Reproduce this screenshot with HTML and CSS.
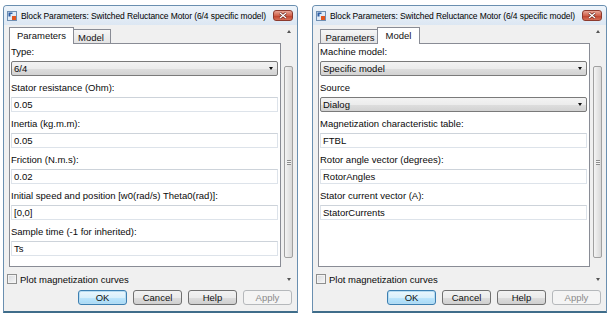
FILE: index.html
```html
<!DOCTYPE html>
<html>
<head>
<meta charset="utf-8">
<title>Block Parameters</title>
<link rel="stylesheet" href="styles.css">
</head>
<body>
<div class="desk">
  <div class="window">
    <div class="titlebar">
      <svg class="appicon" viewBox="0 0 10 10" width="10" height="10"><rect x="0.5" y="0.5" width="9" height="9" fill="#dfeaf6" stroke="#6f8fb2"/><path d="M1.5 1.5 L5.5 1.5 L5.5 3 L3.5 3 L3.5 5.5 L1.5 5.5 Z" fill="#2d5ea5"/><rect x="5" y="5" width="4" height="4" fill="#e2561f"/></svg>
      <span class="title">Block Parameters: Switched Reluctance Motor (6/4 specific model)</span>
      <span class="close"><svg viewBox="0 0 8 7" width="8" height="7"><path d="M1 1 L7 6 M7 1 L1 6" stroke="#5a1d14" stroke-width="2.4"/><path d="M1 1 L7 6 M7 1 L1 6" stroke="#fff" stroke-width="1.3"/></svg></span>
    </div>
    <div class="client">
      <div class="main">
        <div class="content">
          <div class="tabs">
            <div class="tab tab-params active">Parameters</div>
            <div class="tab tab-model">Model</div>
          </div>
          <div class="panel">
            <div class="label">Type:</div>
            <div class="combo"><span>6/4</span><i class="caret"></i></div>
            <div class="label">Stator resistance (Ohm):</div>
            <div class="edit">0.05</div>
            <div class="label">Inertia (kg.m.m):</div>
            <div class="edit">0.05</div>
            <div class="label">Friction (N.m.s):</div>
            <div class="edit">0.02</div>
            <div class="label">Initial speed and position [w0(rad/s) Theta0(rad)]:</div>
            <div class="edit">[0,0]</div>
            <div class="label">Sample time (-1 for inherited):</div>
            <div class="edit">Ts</div>
          </div>
          <div class="check"><span class="box"></span><span>Plot magnetization curves</span></div>
        </div>
        <div class="scrollbar">
          <div class="arrowbox"><i class="sarrow up"></i></div>
          <div class="thumb"><span class="grip"></span></div>
          <div class="spacer"></div>
          <div class="arrowbox bottom"><i class="sarrow down"></i></div>
        </div>
      </div>
      <div class="buttons">
        <span class="btn default">OK</span>
        <span class="btn">Cancel</span>
        <span class="btn">Help</span>
        <span class="btn disabled">Apply</span>
      </div>
    </div>
  </div>

  <div class="window">
    <div class="titlebar">
      <svg class="appicon" viewBox="0 0 10 10" width="10" height="10"><rect x="0.5" y="0.5" width="9" height="9" fill="#dfeaf6" stroke="#6f8fb2"/><path d="M1.5 1.5 L5.5 1.5 L5.5 3 L3.5 3 L3.5 5.5 L1.5 5.5 Z" fill="#2d5ea5"/><rect x="5" y="5" width="4" height="4" fill="#e2561f"/></svg>
      <span class="title">Block Parameters: Switched Reluctance Motor (6/4 specific model)</span>
      <span class="close"><svg viewBox="0 0 8 7" width="8" height="7"><path d="M1 1 L7 6 M7 1 L1 6" stroke="#5a1d14" stroke-width="2.4"/><path d="M1 1 L7 6 M7 1 L1 6" stroke="#fff" stroke-width="1.3"/></svg></span>
    </div>
    <div class="client">
      <div class="main">
        <div class="content">
          <div class="tabs">
            <div class="tab tab-params">Parameters</div>
            <div class="tab tab-model active">Model</div>
          </div>
          <div class="panel">
            <div class="label">Machine model:</div>
            <div class="combo"><span>Specific model</span><i class="caret"></i></div>
            <div class="label">Source</div>
            <div class="combo"><span>Dialog</span><i class="caret"></i></div>
            <div class="label">Magnetization characteristic table:</div>
            <div class="edit">FTBL</div>
            <div class="label">Rotor angle vector (degrees):</div>
            <div class="edit">RotorAngles</div>
            <div class="label">Stator current vector (A):</div>
            <div class="edit">StatorCurrents</div>
          </div>
          <div class="check"><span class="box"></span><span>Plot magnetization curves</span></div>
        </div>
        <div class="scrollbar">
          <div class="arrowbox"><i class="sarrow up"></i></div>
          <div class="thumb"><span class="grip"></span></div>
          <div class="spacer"></div>
          <div class="arrowbox bottom"><i class="sarrow down"></i></div>
        </div>
      </div>
      <div class="buttons">
        <span class="btn default">OK</span>
        <span class="btn">Cancel</span>
        <span class="btn">Help</span>
        <span class="btn disabled">Apply</span>
      </div>
    </div>
  </div>
</div>
</body>
</html>
```
FILE: styles.css
```css
* { box-sizing: border-box; }
body {
  margin: 0;
  background: #ffffff;
  font-family: "Liberation Sans", Arial, sans-serif;
  font-size: 9.5px;
  color: #0a0a0a;
}
.desk {
  display: flex;
  gap: 14px;
  padding: 5px 0 0 3px;
}
.window {
  width: 295px;
  height: 308px;
  border: 1px solid #6a8fb0;
  border-bottom: 2px solid #3f6d8a;
  border-radius: 4px 4px 0 0;
  background: #dde8f4;
  display: flex;
  flex-direction: column;
  overflow: hidden;
}
.titlebar {
  height: 19px;
  flex: none;
  display: flex;
  align-items: center;
  padding: 0 4px 0 3px;
  background: linear-gradient(#eef4fa, #dce7f3);
}
.appicon { flex: none; margin-right: 4px; }
.title {
  flex: 1;
  white-space: nowrap;
  font-size: 8.5px;
  letter-spacing: -0.1px;
  color: #000;
}
.close {
  flex: none;
  width: 20px;
  height: 11px;
  border: 1px solid #8c3a2e;
  border-radius: 3px;
  background: linear-gradient(#e9a595, #d0634d 50%, #bd3f2a 51%, #d66f57);
  display: flex;
  align-items: center;
  justify-content: center;
}
.client {
  flex: 1;
  background: #f0f0f0;
  display: flex;
  flex-direction: column;
  padding-right: 3px;
}
.main {
  height: 263px;
  flex: none;
  display: flex;
}
.content {
  width: 279px;
  display: flex;
  flex-direction: column;
}
.tabs {
  height: 18px;
  display: flex;
  align-items: flex-end;
  padding-left: 7px;
  position: relative;
  z-index: 1;
}
.tab {
  height: 14px;
  border: 1px solid #898c95;
  border-bottom: none;
  background: linear-gradient(#f6f6f6, #e4e4e4);
  display: flex;
  align-items: center;
  justify-content: center;
  padding-top: 1px;
  color: #111;
}
.tab + .tab { margin-left: -1px; }
.tab-params { width: 60px; }
.tab-model { width: 40px; }
.tab.active {
  height: 17px;
  margin-bottom: -1px;
  margin-right: -2px;
  background: #ffffff;
  position: relative;
  z-index: 2;
  padding-bottom: 2px;
}
.tab-params.active { width: 65px; margin-left: -2px; }
.tab-model.active { width: 43px; margin-left: -3px; }
.panel {
  margin-left: 5px;
  width: 272px;
  height: 224px;
  border: 1px solid #898c95;
  background: #ffffff;
  padding: 1px 2px 0 1px;
  display: flex;
  flex-direction: column;
}
.label {
  height: 14px;
  line-height: 14px;
  margin-bottom: 2px;
  white-space: nowrap;
}
.combo, .edit {
  height: 15px;
  margin-bottom: 5px;
  display: flex;
  align-items: center;
  padding-left: 2px;
  white-space: nowrap;
}
.combo {
  border: 1px solid #7a7a7a;
  border-radius: 2px;
  background: linear-gradient(#f3f3f3, #ececec 50%, #dedede 51%, #d2d2d2);
  justify-content: space-between;
  padding-right: 4px;
}
.caret {
  width: 0;
  height: 0;
  border-left: 2px solid transparent;
  border-right: 2px solid transparent;
  border-top: 3px solid #111;
}
.edit {
  border: 1px solid #dde3ea;
  border-top-color: #cdd3da;
  background: #ffffff;
}
.check {
  height: 12px;
  margin-top: 6px;
  padding-left: 3px;
  display: flex;
  align-items: center;
}
.box {
  width: 10px;
  height: 10px;
  border: 1px solid #8e8f8f;
  background: linear-gradient(135deg, #d6d9dd, #f7f7f7);
  box-shadow: inset 0 0 0 1px #f3f3f3;
  margin-right: 3px;
}
.scrollbar {
  width: 11px;
  display: flex;
  flex-direction: column;
  align-items: center;
}
.arrowbox {
  height: 12px;
  width: 11px;
  display: flex;
  align-items: center;
  justify-content: center;
}
.arrowbox.bottom { margin-bottom: 3px; }
.sarrow {
  width: 0;
  height: 0;
  border-left: 2px solid transparent;
  border-right: 2px solid transparent;
}
.sarrow.up { border-bottom: 3px solid #555; }
.sarrow.down { border-top: 3px solid #555; }
.thumb {
  margin-top: 29px;
  width: 9px;
  height: 192px;
  border: 1px solid #a0a0a0;
  border-radius: 2px;
  background: linear-gradient(90deg, #f4f4f4, #e6e6e6 50%, #d8d8d8);
  display: flex;
  align-items: center;
  justify-content: center;
}
.grip {
  width: 4px;
  height: 5px;
  background: repeating-linear-gradient(#8d8d8d 0 1px, #f4f4f4 1px 2px);
}
.spacer { flex: 1; }
.buttons {
  height: 15px;
  margin-top: 2px;
  display: flex;
  justify-content: flex-end;
  gap: 6px;
  padding-right: 2px;
}
.btn {
  width: 49px;
  height: 15px;
  border: 1px solid #707070;
  border-radius: 3px;
  background: linear-gradient(#f2f2f2, #ebebeb 50%, #dddddd 51%, #cfcfcf);
  display: flex;
  align-items: center;
  justify-content: center;
  color: #111;
}
.btn.default {
  border-color: #3c7fb1;
  background: linear-gradient(#eaf6fd, #d9f0fc 50%, #bee6fd 51%, #a7d9f5);
  box-shadow: inset 0 0 0 1px #b6dcf2;
}
.btn.disabled {
  border-color: #b5b8bb;
  background: #f4f4f4;
  color: #8a8a8a;
}
```
